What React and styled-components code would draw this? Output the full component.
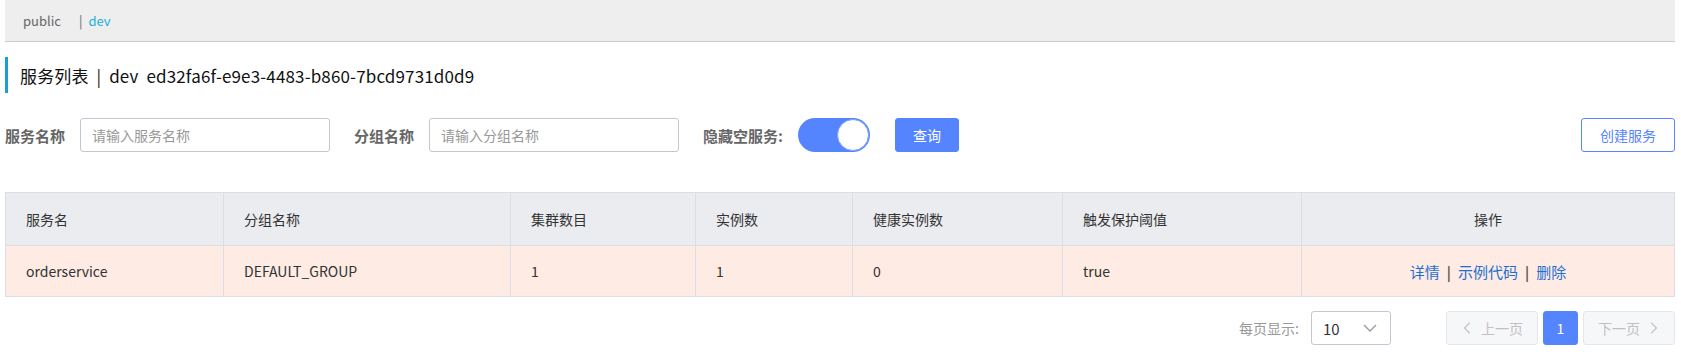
import styled, { createGlobalStyle } from "styled-components";

const GlobalStyle = createGlobalStyle`
  body {
    margin: 0;
    background: #fff;
    font-family: "Noto Sans CJK SC", "Noto Sans", sans-serif;
    color: #333;
  }
`;

const Page = styled.div`
  padding: 0 6px 0 5px;
`;

const NamespaceBar = styled.div`
  height: 41px;
  background: #eeeeee;
  border-bottom: 1px solid #cccccc;
  display: flex;
  align-items: center;
  padding-left: 18px;
  font-size: 13px;
  color: #666;
`;

const Namespace = styled.span`
  color: ${(p) => (p.active ? "#21b2dc" : "#666")};
  cursor: pointer;
`;

const Sep = styled.span`
  color: #666;
  margin: 0 6px 0 18px;
`;

const Title = styled.div`
  margin-top: 15px;
  height: 36px;
  border-left: 3px solid #1b9dd6;
  padding-left: 12px;
  display: flex;
  align-items: center;
  font-size: 17px;
  letter-spacing: 0.15px;
  color: #111;
  white-space: pre;
`;

const SearchRow = styled.div`
  margin-top: 25px;
  height: 34px;
  display: flex;
  align-items: center;
`;

const Label = styled.span`
  font-size: 15px;
  font-weight: bold;
  color: #666;
  margin-right: ${(p) => p.gap || 15}px;
`;

const Input = styled.input`
  box-sizing: border-box;
  width: 250px;
  height: 34px;
  border: 1px solid #c4c6cf;
  border-radius: 3px;
  padding: 0 11px;
  font-family: inherit;
  font-size: 14px;
  color: #333;
  margin-right: 24px;
  outline: none;
  &::placeholder {
    color: #999;
  }
`;

const Switch = styled.div`
  box-sizing: border-box;
  width: 72px;
  height: 34px;
  border-radius: 17px;
  background: #5584ff;
  display: flex;
  align-items: center;
  justify-content: flex-end;
  padding-right: 1px;
  margin-right: 25px;
`;

const Knob = styled.div`
  width: 30px;
  height: 30px;
  border-radius: 50%;
  background: #fff;
  border: 1px solid #7aa0ff;
`;

const Button = styled.button`
  box-sizing: border-box;
  height: 34px;
  padding: 0 ${(p) => (p.primary ? 17 : 18)}px;
  border-radius: 3px;
  font-family: inherit;
  font-size: 14px;
  cursor: pointer;
  border: 1px solid #5584ff;
  background: ${(p) => (p.primary ? "#5584ff" : "#fff")};
  color: ${(p) => (p.primary ? "#fff" : "#5584ff")};
  margin-left: ${(p) => (p.right ? "auto" : "0")};
`;

const Table = styled.table`
  margin-top: 40px;
  width: 100%;
  border-collapse: collapse;
  table-layout: fixed;
  font-size: 14px;
  border: 1px solid #dcdee3;
`;

const Th = styled.th`
  height: 52px;
  background: #ebecf0;
  color: #333;
  font-weight: normal;
  text-align: ${(p) => (p.center ? "center" : "left")};
  padding: 0 20px;
  border: 1px solid #dcdee3;
`;

const Td = styled.td`
  height: 50px;
  background: #fdebe4;
  color: #333;
  text-align: ${(p) => (p.center ? "center" : "left")};
  padding: 0 20px;
  border: 1px solid #dcdee3;
`;

const Link = styled.a`
  color: #1f6fd1;
  font-size: 15px;
  cursor: pointer;
`;

const Bar = styled.span`
  color: #555;
  font-weight: bold;
  margin: 0 7px;
`;

const Pager = styled.div`
  margin-top: 14px;
  display: flex;
  align-items: center;
  justify-content: flex-end;
`;

const PagerLabel = styled.span`
  font-size: 14px;
  color: #999;
  margin-right: 12px;
`;

const Select = styled.div`
  box-sizing: border-box;
  width: 80px;
  height: 34px;
  border: 1px solid #c4c6cf;
  border-radius: 3px;
  display: flex;
  align-items: center;
  justify-content: space-between;
  padding: 0 12px 0 11px;
  font-size: 15px;
  color: #333;
  margin-right: 50px;
`;

const PageBtn = styled.div`
  box-sizing: border-box;
  height: 34px;
  min-width: 35px;
  padding: 0 ${(p) => (p.current ? 0 : 10)}px;
  margin-left: 5px;
  border-radius: 3px;
  display: flex;
  align-items: center;
  justify-content: center;
  gap: 6px;
  font-size: 14px;
  border: 1px solid ${(p) => (p.current ? "#5584ff" : "#e6e7eb")};
  background: ${(p) => (p.current ? "#5584ff" : "#f6f7f9")};
  color: ${(p) => (p.current ? "#fff" : "#c1c1c1")};
  width: ${(p) => (p.current ? "35px" : "92px")};
`;

const Chevron = ({ dir = "down", color = "#999", size = 14 }) => {
  const pts = {
    down: "2,5 8,11 14,5",
    left: "10,2 4,8 10,14",
    right: "6,2 12,8 6,14",
  }[dir];
  return (
    <svg width={size} height={size} viewBox="0 0 16 16">
      <polyline points={pts} fill="none" stroke={color} strokeWidth="1.3" />
    </svg>
  );
};

const columns = [
  { title: "服务名", w: 218 },
  { title: "分组名称", w: 287 },
  { title: "集群数目", w: 185 },
  { title: "实例数", w: 157 },
  { title: "健康实例数", w: 210 },
  { title: "触发保护阈值", w: 239 },
  { title: "操作", center: true },
];

const row = ["orderservice", "DEFAULT_GROUP", "1", "1", "0", "true"];

export default function App() {
  return (
    <Page>
      <GlobalStyle />
      <NamespaceBar>
        <Namespace>public</Namespace>
        <Sep>|</Sep>
        <Namespace active>dev</Namespace>
      </NamespaceBar>
      <Title>服务列表  |  dev  ed32fa6f-e9e3-4483-b860-7bcd9731d0d9</Title>
      <SearchRow>
        <Label>服务名称</Label>
        <Input placeholder="请输入服务名称" />
        <Label>分组名称</Label>
        <Input placeholder="请输入分组名称" />
        <Label>隐藏空服务:</Label>
        <Switch>
          <Knob />
        </Switch>
        <Button primary>查询</Button>
        <Button right>创建服务</Button>
      </SearchRow>
      <Table>
        <colgroup>
          {columns.map((c, i) => (
            <col key={i} style={c.w ? { width: c.w } : undefined} />
          ))}
        </colgroup>
        <thead>
          <tr>
            {columns.map((c) => (
              <Th key={c.title} center={c.center}>
                {c.title}
              </Th>
            ))}
          </tr>
        </thead>
        <tbody>
          <tr>
            {row.map((v, i) => (
              <Td key={i}>{v}</Td>
            ))}
            <Td center>
              <Link>详情</Link>
              <Bar>|</Bar>
              <Link>示例代码</Link>
              <Bar>|</Bar>
              <Link>删除</Link>
            </Td>
          </tr>
        </tbody>
      </Table>
      <Pager>
        <PagerLabel>每页显示:</PagerLabel>
        <Select>
          <span>10</span>
          <Chevron dir="down" size={16} />
        </Select>
        <PageBtn>
          <Chevron dir="left" color="#c1c1c1" />
          上一页
        </PageBtn>
        <PageBtn current>1</PageBtn>
        <PageBtn>
          下一页
          <Chevron dir="right" color="#c1c1c1" />
        </PageBtn>
      </Pager>
    </Page>
  );
}
